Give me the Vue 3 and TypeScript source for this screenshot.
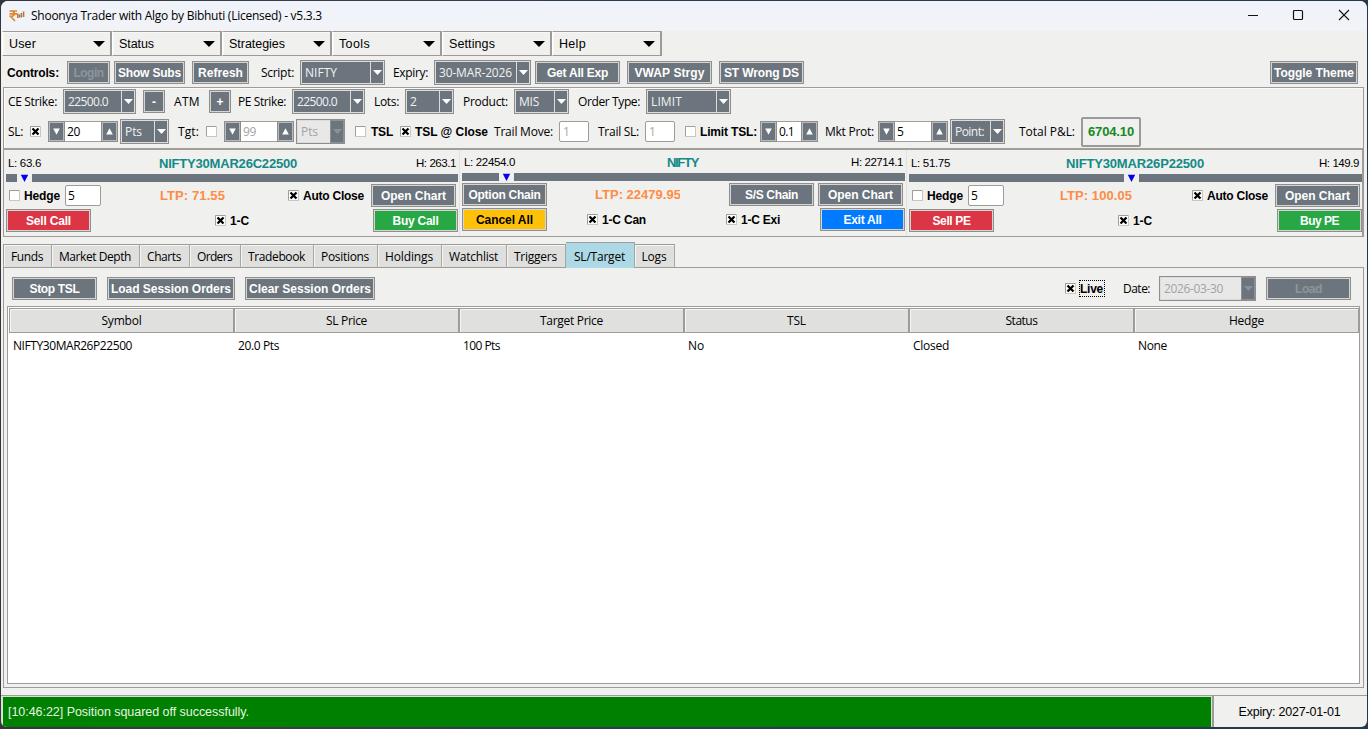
<script setup lang="ts">
import { h, type FunctionalComponent, type VNode } from 'vue'

// Spreads the letters of a label over its design width.
function fit(node: VNode, width?: number) {
  const el = node.el as HTMLElement
  const count = (el.textContent || '').length
  if (!width || !count) return
  const natural = el.getBoundingClientRect().width
  el.style.letterSpacing = ((width - natural) / count).toFixed(3) + 'px'
}

const T: FunctionalComponent<{ t: string; w?: number }> = (p) =>
  h('span', { class: 'txt', onVnodeMounted: (n: VNode) => fit(n, p.w) }, p.t)
T.props = ['t', 'w']

const Btn: FunctionalComponent<{ t: string; w?: number }> = (p) =>
  h('button', { class: 'btn', type: 'button' }, [h(T, { t: p.t, w: p.w })])
Btn.props = ['t', 'w']

const Combo: FunctionalComponent<{ t: string; w?: number }> = (p) =>
  h('div', { class: 'combo' }, [
    h('div', { class: 'combo-value' }, [h(T, { t: p.t, w: p.w })]),
    h('div', { class: 'combo-arrow' }, [
      h('svg', { width: 9, height: 5, viewBox: '0 0 9 5' }, [h('path', { d: 'M0 0H9L4.5 5Z', fill: 'currentColor' })]),
    ]),
  ])
Combo.props = ['t', 'w']

const step = (d: string) =>
  h('div', { class: 'spin-btn' }, [h('svg', { width: 7, height: 7, viewBox: '0 0 7 7' }, [h('path', { d, fill: '#fff' })])])

const Spin: FunctionalComponent<{ t: string; w?: number }> = (p) =>
  h('div', { class: 'spin' }, [
    step('M0.2 0.5H6.8L3.5 6.8Z'),
    h('div', { class: 'spin-value' }, [h(T, { t: p.t, w: p.w })]),
    step('M0.2 6.5H6.8L3.5 0.2Z'),
  ])
Spin.props = ['t', 'w']

const Check: FunctionalComponent<{ on?: boolean }> = (p) =>
  h('svg', { class: 'check', width: 11, height: 11, viewBox: '0 0 11 11' }, [
    h('rect', { x: 0.5, y: 0.5, width: 10, height: 10, fill: '#fff', stroke: '#c9c7c3' }),
    h('path', { d: 'M0.5 10V0.5H10', fill: 'none', stroke: '#a09e9a' }),
    p.on ? h('path', { d: 'M2.5 2.5L8.5 8.5M8.5 2.5L2.5 8.5', fill: 'none', stroke: '#000', 'stroke-width': 2.3 }) : null,
  ])
Check.props = { on: Boolean }

const menus = [
  { t: 'User', w: 27 }, { t: 'Status', w: 35 }, { t: 'Strategies', w: 56 },
  { t: 'Tools', w: 31 }, { t: 'Settings', w: 46 }, { t: 'Help', w: 27 },
]
const tabs = [
  { t: 'Funds', w: 32 }, { t: 'Market Depth', w: 72 }, { t: 'Charts', w: 34 }, { t: 'Orders', w: 35 },
  { t: 'Tradebook', w: 57 }, { t: 'Positions', w: 48 }, { t: 'Holdings', w: 48 }, { t: 'Watchlist', w: 49 },
  { t: 'Triggers', w: 43 }, { t: 'SL/Target', w: 51, active: true }, { t: 'Logs', w: 25 },
]
const columns = [
  { head: 'Symbol', hw: 40, cell: 'NIFTY30MAR26P22500', cw: 119 },
  { head: 'SL Price', hw: 41, cell: '20.0 Pts', cw: 41 },
  { head: 'Target Price', hw: 63, cell: '100 Pts', cw: 37 },
  { head: 'TSL', hw: 19, cell: 'No', cw: 16 },
  { head: 'Status', hw: 32, cell: 'Closed', cw: 36 },
  { head: 'Hedge', hw: 35, cell: 'None', cw: 29 },
]
</script>

<template>
  <div class="desktop">
    <div class="window">
      <header class="title-bar">
        <svg class="logo" width="16" height="14" viewBox="0 0 16 14">
          <path d="M0.5 2H8M0.5 4.8H8M1.5 2C6.8 1.8 6.5 7.6 1.5 7.4L6 12" fill="none" stroke="#e0862f" stroke-width="1.7" />
          <path d="M8.8 4.5V9M10.6 5.5V8.5" stroke="#d9533a" stroke-width="1.4" />
          <path d="M12.4 4V8.5" stroke="#5aa04c" stroke-width="1.5" />
          <path d="M14.6 2.5V8" stroke="#d9632c" stroke-width="1.5" />
        </svg>
        <T class="title" t="Shoonya Trader with Algo by Bibhuti (Licensed) - v5.3.3" :w="291" />
        <div class="sys">
          <svg width="102" height="12" viewBox="0 0 102 12" fill="none" stroke="#111">
            <path d="M0 6.5H10" />
            <rect x="45.5" y="1.5" width="9" height="9" rx="1" stroke-width="1.2" />
            <path d="M91 1L101 11M101 1L91 11" stroke-width="1.1" />
          </svg>
        </div>
      </header>

      <nav class="menu-bar">
        <div v-for="m in menus" :key="m.t" class="menu">
          <T :t="m.t" :w="m.w" />
          <svg width="12" height="6" viewBox="0 0 12 6"><path d="M0 0H12L6 6Z" /></svg>
        </div>
      </nav>

      <section class="row controls">
        <T class="bold" t="Controls:" :w="52" />
        <Btn class="w43 off" t="Login" :w="30" />
        <Btn class="w71" t="Show Subs" :w="63" />
        <Btn class="w57" t="Refresh" :w="45" />
        <T t="Script:" :w="33" />
        <Combo class="c85" t="NIFTY" :w="32" />
        <T t="Expiry:" :w="35" />
        <Combo class="c97" t="30-MAR-2026" :w="73" />
        <Btn t="Get All Exp" :w="61" />
        <Btn t="VWAP Strgy" :w="70" />
        <Btn t="ST Wrong DS" :w="75" />
        <Btn class="w88" t="Toggle Theme" :w="80" />
      </section>

      <section class="options">
        <div class="row strikes">
          <T t="CE Strike:" :w="49" />
          <Combo class="c73" t="22500.0" :w="40" />
          <Btn class="w23" t="-" />
          <T t="ATM" :w="26" />
          <Btn class="w23" t="+" />
          <T t="PE Strike:" :w="48" />
          <Combo class="c73" t="22500.0" :w="40" />
          <T t="Lots:" :w="25" />
          <Combo class="c49" t="2" />
          <T t="Product:" :w="45" />
          <Combo class="c55" t="MIS" :w="20" />
          <T t="Order Type:" :w="62" />
          <Combo class="c85" t="LIMIT" :w="31" />
        </div>
        <div class="row stops">
          <T t="SL:" :w="15" />
          <Check on />
          <Spin t="20" :w="13" />
          <Combo class="c49" t="Pts" :w="17" />
          <T t="Tgt:" :w="21" />
          <Check />
          <Spin class="mute" t="99" :w="13" />
          <Combo class="c49 mute" t="Pts" :w="17" />
          <Check />
          <T class="bold" t="TSL" :w="22" />
          <Check on />
          <T class="bold" t="TSL @ Close" :w="73" />
          <T t="Trail Move:" :w="59" />
          <div class="entry short mute"><T t="1" /></div>
          <T t="Trail SL:" :w="41" />
          <div class="entry short mute"><T t="1" /></div>
          <Check />
          <T class="bold" t="Limit TSL:" :w="57" />
          <Spin class="narrow" t="0.1" :w="15" />
          <T t="Mkt Prot:" :w="49" />
          <Spin t="5" />
          <Combo class="c55" t="Point:" :w="29" />
          <T t="Total P&amp;L:" :w="56" />
          <div class="pnl"><T t="6704.10" :w="46" /></div>
        </div>
      </section>

      <section class="quotes">
        <article class="quote call">
          <div class="range">
            <T t="L: 63.6" :w="33" /><T class="name" t="NIFTY30MAR26C22500" :w="138" /><T t="H: 263.1" :w="40" />
          </div>
          <div class="track call-track">
            <i></i><svg width="15" height="8" viewBox="0 0 15 8"><path d="M3.8 0.8H11.2L7.5 8Z" fill="#00e" /></svg><i></i>
          </div>
          <div class="row leg-a">
            <Check />
            <T class="bold" t="Hedge" :w="36" />
            <div class="entry"><T t="5" /></div>
            <T class="ltp" t="LTP: 71.55" :w="65" />
            <Check on />
            <T class="bold" t="Auto Close" :w="61" />
            <Btn t="Open Chart" :w="65" />
          </div>
          <div class="row leg-b">
            <Btn class="red" t="Sell Call" :w="45" />
            <Check on />
            <T class="bold" t="1-C" :w="19" />
            <Btn class="green" t="Buy Call" :w="46" />
          </div>
        </article>

        <article class="quote index">
          <div class="range">
            <T t="L: 22454.0" :w="51" /><T class="name" t="NIFTY" :w="31" /><T t="H: 22714.1" :w="52" />
          </div>
          <div class="track index-track">
            <i></i><svg width="15" height="8" viewBox="0 0 15 8"><path d="M3.8 0.8H11.2L7.5 8Z" fill="#00e" /></svg><i></i>
          </div>
          <div class="row index-a">
            <Btn t="Option Chain" :w="72" />
            <div class="clip"><T class="ltp" t="LTP: 22479.95" :w="86" /></div>
            <Btn t="S/S Chain" :w="53" />
            <Btn t="Open Chart" :w="65" />
          </div>
          <div class="row index-b">
            <Btn class="amber" t="Cancel All" :w="57" />
            <Check on />
            <T class="bold" t="1-C Can" :w="44" />
            <Check on />
            <T class="bold" t="1-C Exi" :w="39" />
            <Btn class="blue" t="Exit All" :w="38" />
          </div>
        </article>

        <article class="quote">
          <div class="range">
            <T t="L: 51.75" :w="39" /><T class="name" t="NIFTY30MAR26P22500" :w="138" /><T t="H: 149.9" :w="40" />
          </div>
          <div class="track put-track">
            <i></i><svg width="15" height="8" viewBox="0 0 15 8"><path d="M3.8 0.8H11.2L7.5 8Z" fill="#00e" /></svg><i></i>
          </div>
          <div class="row leg-a put">
            <Check />
            <T class="bold" t="Hedge" :w="36" />
            <div class="entry"><T t="5" /></div>
            <T class="ltp" t="LTP: 100.05" :w="72" />
            <Check on />
            <T class="bold" t="Auto Close" :w="61" />
            <Btn t="Open Chart" :w="65" />
          </div>
          <div class="row leg-b put">
            <Btn class="red" t="Sell PE" :w="38" />
            <Check on />
            <T class="bold" t="1-C" :w="19" />
            <Btn class="green" t="Buy PE" :w="39" />
          </div>
        </article>
      </section>

      <nav class="tabs">
        <div v-for="t in tabs" :key="t.t" class="tab" :class="{ active: t.active }"><T :t="t.t" :w="t.w" /></div>
        <div class="tab-rest"></div>
      </nav>

      <main class="pane">
        <div class="row tools">
          <Btn t="Stop TSL" :w="50" />
          <Btn class="w128" t="Load Session Orders" :w="120" />
          <Btn class="w130" t="Clear Session Orders" :w="122" />
          <Check on />
          <div class="focus"><T class="bold" t="Live" :w="23" /></div>
          <T t="Date:" :w="27" />
          <Combo class="c97 mute" t="2026-03-30" :w="59" />
          <Btn class="off" t="Load" :w="27" />
        </div>
        <div class="tree">
          <div v-for="c in columns" :key="c.head" class="col">
            <div class="head"><T :t="c.head" :w="c.hw" /></div>
            <div class="cell"><T :t="c.cell" :w="c.cw" /></div>
          </div>
        </div>
      </main>

      <footer class="status">
        <div class="message"><T t="[10:46:22] Position squared off successfully." :w="241" /></div>
        <div class="expiry"><T t="Expiry: 2027-01-01" :w="102" /></div>
      </footer>
    </div>
  </div>
</template>

<style>
html, body { overflow: hidden; }

.txt { display: inline-block; white-space: pre; }

.btn {
  box-sizing: border-box;
  width: 85px;
  height: 23px;
  padding: 0;
  display: flex;
  align-items: center;
  justify-content: center;
  border: 1px solid #8d8f8e;
  border-radius: 0;
  box-shadow: inset 0 0 0 1px #d6d5d1;
  background: #6c757d;
  color: #fff;
  font: bold 12px "Liberation Sans", Arial, sans-serif;
}
.btn.w23 { width: 22px; }
.btn.w43 { width: 43px; }
.btn.w57 { width: 57px; }
.btn.w71 { width: 71px; }
.btn.w88 { width: 88px; }
.btn.w128 { width: 128px; }
.btn.w130 { width: 130px; }
.btn.off { color: #8d959b; }
.btn.red { background: #dc3545; }
.btn.green { background: #28a745; }
.btn.blue { background: #007bff; }
.btn.amber { background: #ffc107; color: #000; }

.combo {
  box-sizing: border-box;
  height: 25px;
  display: flex;
  border: 1px solid #8d8f8e;
  background: #6c757d;
  color: #fff;
}
.combo.c49 { width: 49px; }
.combo.c55 { width: 55px; }
.combo.c73 { width: 73px; }
.combo.c85 { width: 85px; }
.combo.c97 { width: 97px; }
.combo-value {
  flex: 1;
  display: flex;
  align-items: center;
  padding: 0 0 1px 3px;
  border: 1px solid #dddcd8;
  border-right: 0;
  color: #f1f2f3;
}
.combo-arrow {
  width: 12px;
  display: flex;
  align-items: center;
  justify-content: center;
  border: 1px solid #dddcd8;
}
.combo.mute .combo-value { background: #e8e8e8; color: #a3a3a3; }
.combo.mute .combo-arrow { color: #8b9297; border-color: #8d9194; }

.spin { display: flex; width: 70px; height: 21px; }
.spin.narrow { width: 58px; }
.spin-btn {
  box-sizing: border-box;
  width: 17px;
  display: flex;
  align-items: center;
  justify-content: center;
  border: 1px solid #8d8f8e;
  box-shadow: inset 0 0 0 1px #b9bbba;
  background: #6c757d;
}
.spin-value {
  flex: 1;
  display: flex;
  align-items: center;
  padding: 0 0 1px 2px;
  border: 1px solid #a19f9b;
  border-width: 1px 0;
  background: #fff;
}
.spin.mute .spin-value { color: #a3a3a3; }
.check { display: block; }
</style>

<style scoped>
.desktop {
  box-sizing: border-box;
  width: 1368px;
  height: 729px;
  padding: 1px 1px 2px;
  background: linear-gradient(90deg, #33343c, #3a3d48 20%, #2a3850 60%, #27384c);
  font: 12px "Open Sans", "Noto Sans", sans-serif;
  color: #000;
}
.window {
  height: 726px;
  display: flex;
  flex-direction: column;
  overflow: hidden;
  border-radius: 7px 7px 6px 6px;
  background: #f0f0ef;
}
.bold { font: bold 12px "Liberation Sans", Arial, sans-serif; }

.title-bar {
  height: 30px;
  flex: none;
  display: flex;
  align-items: center;
  box-sizing: border-box;
  padding: 0 17px 1px 8px;
  background: linear-gradient(#eff3fa, #f1f3f7);
}
.title { margin-left: 6px; }
.sys { margin-left: auto; height: 12px; margin-bottom: 1px; }
.sys svg { display: block; }

.menu-bar { flex: none; height: 26px; display: flex; padding-left: 1px; }
.menu {
  box-sizing: border-box;
  width: 110px;
  height: 25px;
  display: flex;
  align-items: center;
  justify-content: space-between;
  padding: 0 5px 0 6px;
  border: 1px solid #9e9a95;
  border-right-width: 2px;
  border-left-color: #fff;
  box-shadow: inset 1px 1px #f8f8f8;
  font: 12.5px "Liberation Sans", Arial, sans-serif;
}

.row { display: grid; align-items: center; justify-items: start; }
.controls {
  flex: none;
  height: 30px;
  padding: 1px 0 0 6px;
  box-sizing: border-box;
  grid-template-columns: 60px 47px 78px 69px 39px 93px 41px 101px 92px 92px 551px 88px;
}
.options {
  flex: none;
  box-sizing: border-box;
  height: 61px;
  width: 1361px;
  margin-left: 2px;
  border: 1px solid #9e9c98;
  border-bottom: 0;
  box-shadow: inset 1px 1px #fafafa;
}
.strikes {
  height: 27px;
  padding-left: 4px;
  grid-template-columns: 55px 80px 31px 35px 29px 54px 82px 31px 58px 51px 64px 68px 85px;
}
.stops {
  height: 33px;
  padding-left: 4px;
  grid-template-columns: 22px 18px 72px 58px 28px 18px 72px 59px 16px 29px 15px 79px 65px 39px 47px 40px 15px 60px 65px 53px 72px 69px 62px 60px;
}
.entry {
  box-sizing: border-box;
  width: 36px;
  height: 21px;
  display: flex;
  align-items: center;
  padding: 0 0 1px 2px;
  border: 1px solid #9e9c98;
  border-radius: 2px;
  background: #fff;
}
.entry.short { width: 30px; padding-left: 3px; }
.entry.mute { color: #a8a8a8; }
.pnl {
  box-sizing: border-box;
  width: 60px;
  height: 30px;
  display: flex;
  align-items: center;
  justify-content: center;
  border: 2px solid #9a9a98;
  border-radius: 2px;
  color: #138a1e;
  font: bold 13px "Liberation Sans", Arial, sans-serif;
}

.quotes {
  flex: none;
  box-sizing: border-box;
  height: 89px;
  width: 1361px;
  margin-left: 2px;
  display: grid;
  grid-template-columns: 455px 447px 456px;
  border: 1px solid #9e9c98;
  border-top: 2px solid #a19d97;
  border-right-width: 2px;
}
.quote { padding: 2px 0 0 2px; }
.quote + .quote { border-left: 1px solid #e2e1df; padding-left: 2px; }
.range {
  height: 22px;
  display: grid;
  grid-template-columns: 1fr auto 1fr;
  align-items: center;
  justify-items: start;
  padding: 0 3px 0 2px;
  box-sizing: border-box;
  font: 11.5px "Liberation Sans", Arial, sans-serif;
}
.call .name { margin: 0 4px 0 -4px; }
.index .name { margin: 0 1px 0 -1px; }
.range > :last-child { justify-self: end; }
.name { color: #128a86; font: bold 13px "Liberation Sans", Arial, sans-serif; }
.track { height: 8px; display: grid; }
.track i { background: #6c757d; }
.track svg { display: block; }
.call-track { grid-template-columns: 11px 15px 426px; }
.index-track { grid-template-columns: 37px 15px 391px; }
.put-track { grid-template-columns: 215px 15px 223px; }
.leg-a {
  height: 26px;
  padding: 1px 0 0 3px;
  box-sizing: border-box;
  grid-template-columns: 15px 41px 95px 128px 15px 68px 86px;
}
.leg-a.put { grid-template-columns: 15px 41px 92px 132px 15px 68px 86px; }
.leg-b { height: 25px; grid-template-columns: 209px 15px 143px 86px; }
.leg-b.put { grid-template-columns: 209px 15px 144px 86px; }
.ltp { color: #ff8c42; font: bold 13px "Liberation Sans", Arial, sans-serif; }
.clip { width: 85px; overflow: hidden; }
.index { padding-top: 1px; }
.index-a { height: 26px; padding-top: 1px; box-sizing: border-box; grid-template-columns: 133px 134px 89px 86px; }
.index-b { height: 25px; grid-template-columns: 125px 15px 124px 15px 79px 86px; }

.tabs {
  flex: none;
  height: 26px;
  margin: 5px 0 0 2px;
  display: grid;
  align-items: end;
  grid-template-columns: 49px 88px 50px 51px 73px 64px 64px 65px 59px 69px 40px 689px;
}
.tab {
  box-sizing: border-box;
  height: 24px;
  display: flex;
  align-items: center;
  justify-content: center;
  padding-right: 1px;
  border: 1px solid #9e9c98;
  border-right-color: #a8a6a2;
  box-shadow: inset 1px 1px #f4f4f3;
  background: #dfdfde;
}
.tab + .tab { border-left: 0; }
.tab.active { height: 26px; background: #add8e6; border-bottom: 0; box-shadow: none; padding-top: 2px; }
.tab-rest { height: 1px; background: #9e9c98; }
.pane {
  flex: none;
  box-sizing: border-box;
  width: 1361px;
  height: 420px;
  margin-left: 2px;
  border: 1px solid #9e9c98;
  border-top: 0;
  padding: 0 3px 3px;
}
.tools {
  height: 38px;
  padding: 3px 0 0 5px;
  box-sizing: border-box;
  grid-template-columns: 95px 138px 820px 14px 44px 36px 107px 86px;
}
.focus { box-sizing: border-box; height: 17px; width: 26px; border: 1px dotted #000; display: flex; align-items: center; }
.tree {
  box-sizing: border-box;
  height: 378px;
  display: grid;
  grid-template-columns: repeat(6, 225px);
  border: 1px solid #9e9c98;
  padding: 1px 0 0 1px;
  background: #fff;
}
.head {
  box-sizing: border-box;
  height: 25px;
  display: flex;
  align-items: center;
  justify-content: center;
  background: #e0e0df;
  border: 1px solid #9e9c98;
  box-shadow: inset 1px 1px #f6f6f5;
}
.cell { height: 25px; display: flex; align-items: center; padding-left: 4px; }

.status {
  flex: none;
  box-sizing: border-box;
  height: 33px;
  margin-top: 7px;
  display: grid;
  grid-template-columns: 1211px 1fr;
  border-top: 1px solid #9e9c98;
  font: 12.5px "Liberation Sans", Arial, sans-serif;
}
.message {
  display: flex;
  align-items: center;
  padding-left: 5px;
  border: 1px solid #d5e5d0;
  border-left-width: 2px;
  background: #008000;
  color: #e5f5e0;
}
.expiry { display: flex; align-items: center; justify-content: center; padding-right: 2px; border-left: 2px solid #9e9c98; }
</style>
